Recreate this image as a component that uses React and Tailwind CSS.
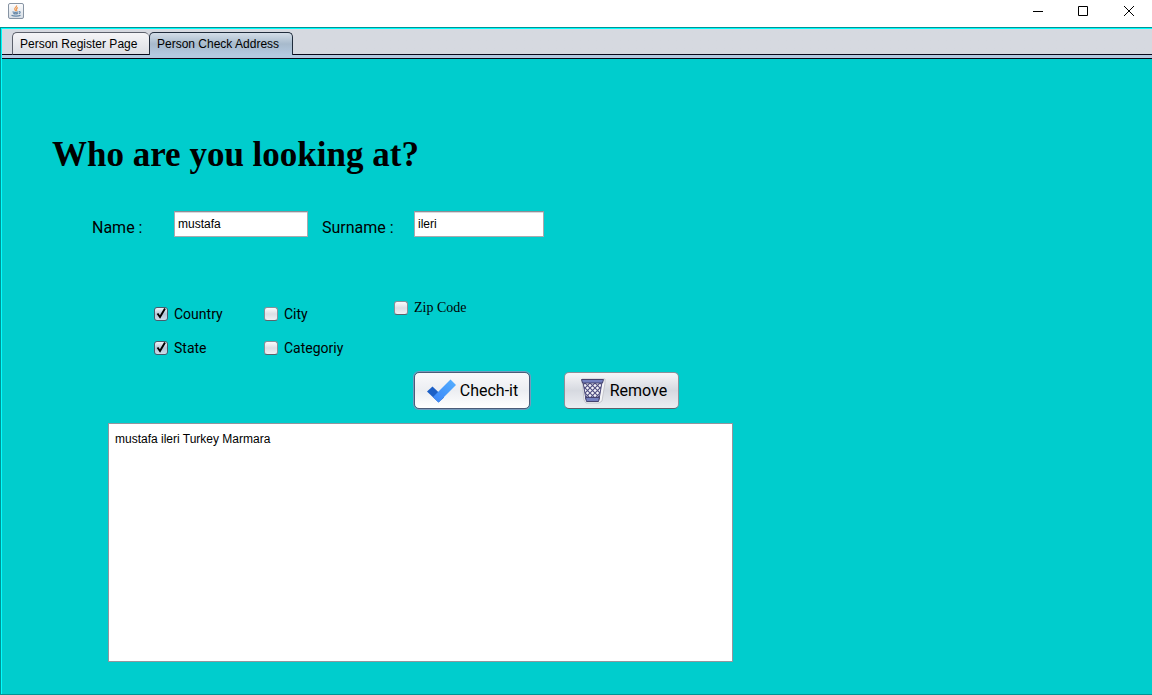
import { useState } from "react";

function JavaIcon() {
  return (
    <svg width="16" height="16" viewBox="0 0 16 16" aria-hidden="true">
      <defs>
        <linearGradient id="java-tile" x1="0" y1="0" x2="0" y2="1">
          <stop offset="0" stopColor="#fdfdfe" />
          <stop offset="1" stopColor="#d5dde5" />
        </linearGradient>
      </defs>
      <rect x="0.5" y="0.5" width="15" height="15" rx="1.5" fill="url(#java-tile)" stroke="#8794a3" />
      <path d="M8.6 2.4c.6 1.500-2.400 2.300-1.900 3.800.2.700.9 1.100.8 1.900M9.900 4.600c-1.300.6-1.800 1.200-1.300 2 .4.600.1 1.100-.3 1.500" fill="none" stroke="#ee9a55" strokeWidth="1.200" />
      <path d="M4.500 8.800c1.500.6 4.500.6 6 0M5.300 10.400c1.200.5 3.400.5 4.600 0M11 8.700c1.600-.2 1.500 1.500-.2 1.900M3.500 12.200c2 1.100 7 1.100 9 0" fill="none" stroke="#6688a8" strokeWidth="1.200" />
    </svg>
  );
}

function WindowButton({ label, path }) {
  return (
    <button type="button" aria-label={label} className="flex h-[22px] w-[46px] items-center justify-center">
      <svg width="12" height="12" viewBox="0 0 12 12" fill="none" stroke="#000" aria-hidden="true">
        <path d={path} />
      </svg>
    </button>
  );
}

function CheckOption({ label, defaultChecked = false, serif = false }) {
  const [checked, setChecked] = useState(defaultChecked);
  return (
    <label className={serif ? "flex items-center gap-1.5 font-['Liberation_Serif',serif] text-[14px] leading-4" : "flex items-center gap-1.5 font-['Roboto',sans-serif] text-[14px] leading-4"}>
      <span className="grid size-3.5">
        <input
          type="checkbox"
          checked={checked}
          onChange={(e) => setChecked(e.target.checked)}
          className="col-start-1 row-start-1 size-3.5 appearance-none rounded-[3px] border border-[#8a8f98] border-b-[#5e626b] bg-linear-to-b from-[#fbfbfc] via-[#dddfe5] to-[#eff0f4] checked:border-[#4a5a6c] checked:from-[#f0f4f8] checked:via-[#b4c5d6] checked:to-[#ccdcea]"
        />
        {checked && (
          <svg className="pointer-events-none col-start-1 row-start-1" width="14" height="14" viewBox="0 0 14 14" fill="none" aria-hidden="true">
            <path d="M3.500 6.500 6 10 11 1.500" stroke="#000" strokeWidth="1.900" />
          </svg>
        )}
      </span>
      {label}
    </label>
  );
}

function TickIcon() {
  return (
    <svg width="30" height="24" viewBox="0 0 30 24" aria-hidden="true">
      <defs>
        <linearGradient id="tick-long" x1="0" y1="1" x2="1" y2="0">
          <stop offset="0" stopColor="#3a83f7" />
          <stop offset="1" stopColor="#55b0ff" />
        </linearGradient>
      </defs>
      <path d="M1 12.500 6.500 7.500 18 18.500 12.500 23.500Z" fill="#1c5fc6" />
      <path d="M7 18 24.500 .500 30 6 12.500 23.500Z" fill="url(#tick-long)" />
    </svg>
  );
}

function BinIcon() {
  return (
    <svg width="26" height="26" viewBox="0 0 26 26" aria-hidden="true">
      <defs>
        <pattern id="bin-mesh" width="5" height="5" patternUnits="userSpaceOnUse">
          <rect width="5" height="5" fill="#f2f2f8" />
          <path d="M0 0 5 5M5 0 0 5" stroke="#504e80" strokeWidth="1.100" />
        </pattern>
      </defs>
      <path d="M2 1H25V5L22 23 19 25H6L4 22Z" fill="#f5f5f7" stroke="#c4c6cc" />
      <path d="M3 4H22L19 21.500H6Z" fill="url(#bin-mesh)" stroke="#4b4a7a" />
      <path d="M1.500 1.500H23.500L22.500 5H2.500Z" fill="#7480bf" stroke="#45436f" />
      <path d="M5.500 19.500H19.500L18.500 23.500H6.500Z" fill="#7480bf" stroke="#45436f" />
    </svg>
  );
}

const field =
  "h-[26px] border border-[#a9a9ad] border-t-[#8d8e95] bg-white px-[3px] text-[12px] text-black shadow-[inset_0_1px_0_#d8d8dc] outline-none";

export default function App() {
  const [result, setResult] = useState("mustafa ileri Turkey Marmara");
  return (
    <div className="flex min-h-screen flex-col bg-white font-['Liberation_Sans',Arial,sans-serif] text-[12px] text-black">
      <header className="flex h-[27px] items-start justify-between pl-2">
        <div className="pt-[3px]">
          <JavaIcon />
        </div>
        <div className="flex">
          <WindowButton label="Minimize" path="M2 6.500H12" />
          <WindowButton label="Maximize" path="M1.500 1.500H10.500V10.500H1.500Z" />
          <WindowButton label="Close" path="M1 1 11 11M11 1 1 11" />
        </div>
      </header>

      <div className="flex grow flex-col border-y border-l border-[#009494] bg-[#00cdcd]">
        <div className="flex grow flex-col border-t border-l border-[#00ffff]">
          <div role="tablist" className="flex h-[30px] items-start border-b border-[#080818] bg-linear-to-b from-[#d6d9e0] from-[26px] to-[#b4c9e0] to-[26px] pt-[3px]">
            <span className="h-[23px] w-2.5 border-b border-[#080818]" />
            <button type="button" role="tab" aria-selected="false" className="h-[23px] w-[137px] rounded-t-[5px] rounded-b-none border border-r-0 border-b-[#080818] border-[#5c606b] bg-linear-to-b from-[#f5f5f7] to-[#dcdee4] pl-[7px] text-left">
              Person Register Page
            </button>
            <button type="button" role="tab" aria-selected="true" className="h-[23px] w-36 rounded-t-[5px] border border-b-0 border-[#202c3c] bg-linear-to-b from-[#d3dde7] via-[#a7bacc] to-[#b4c9e0] pl-[7px] text-left">
              Person Check Address
            </button>
            <span className="h-[23px] grow border-b border-[#080818]" />
          </div>

          <main className="px-[50px] pt-[76px] pb-6">
            <h1 className="font-['Liberation_Serif',serif] text-[35px] leading-10 font-bold">Who are you looking at?</h1>

            <form onSubmit={(e) => e.preventDefault()}>
              <div className="flex items-center pt-[35px] pl-10">
                <label htmlFor="name" className="w-[82px] pt-2 font-['Roboto',sans-serif] text-[16px] leading-5">Name :</label>
                <input id="name" defaultValue="mustafa" className={`${field} w-[134px]`} />
                <label htmlFor="surname" className="ml-3.5 w-[92px] pt-2 font-['Roboto',sans-serif] text-[16px] leading-5">Surname :</label>
                <input id="surname" defaultValue="ileri" className={`${field} w-[130px]`} />
              </div>

              <div className="flex items-start pt-[62px] pl-[102px]">
                <div className="grid grid-cols-[110px_130px] gap-y-[18px] pt-1.5">
                  <CheckOption label="Country" defaultChecked />
                  <CheckOption label="City" />
                  <CheckOption label="State" defaultChecked />
                  <CheckOption label="Categoriy" />
                </div>
                <CheckOption label="Zip Code" serif />
              </div>

              <div className="flex gap-[34px] pt-4 pl-[362px] font-['Roboto',sans-serif] text-[16px]">
                <button type="submit" className="flex h-[37px] w-[116px] items-center justify-center gap-1 rounded-[5px] border border-[#4c5c78] bg-linear-to-b from-[#f9f9fb] via-[#eceef2] to-white shadow-[0_0_0_1px_#739cbe]">
                  <TickIcon />
                  Chech-it
                </button>
                <button type="button" onClick={() => setResult("")} className="flex h-[37px] w-[115px] items-center justify-center gap-1 rounded-[5px] border border-[#8c9099] border-b-[#5e626b] bg-linear-to-b from-[#f6f6f8] via-[#d6d9e0] to-[#eceef2] pl-1">
                  <BinIcon />
                  Remove
                </button>
              </div>
            </form>

            <div className="pt-3.5 pl-14">
              <textarea
                aria-label="Result"
                value={result}
                onChange={(e) => setResult(e.target.value)}
                className="block h-[239px] w-full max-w-[625px] resize-none border border-[#92959d] bg-white px-1.5 py-2 text-[12px] leading-[14px] outline-none"
              />
            </div>
          </main>
        </div>
      </div>
    </div>
  );
}
